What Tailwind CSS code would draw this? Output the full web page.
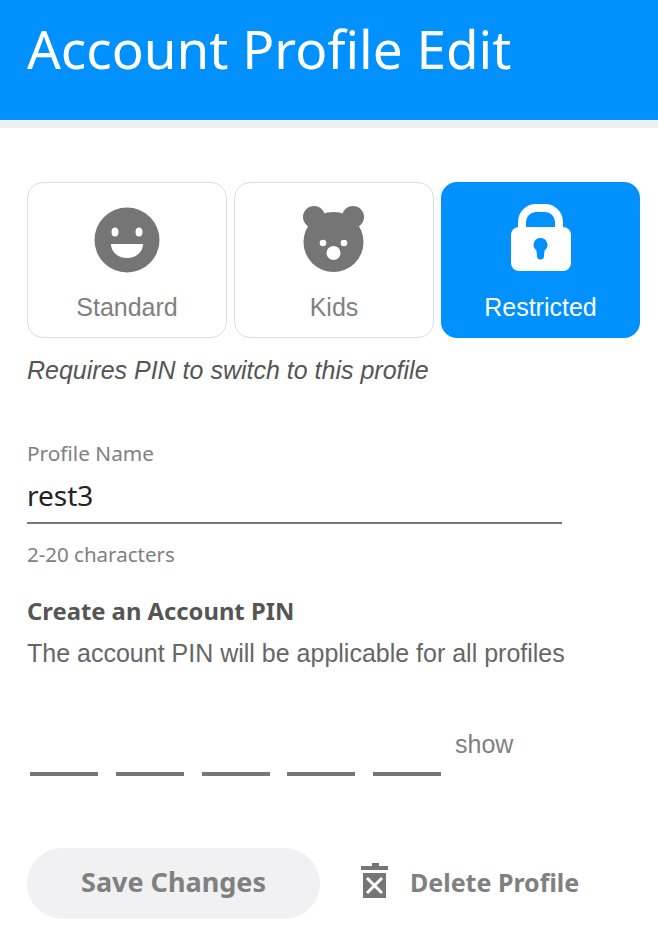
<!DOCTYPE html>
<html lang="en">
<head>
    <meta charset="UTF-8">
    <title>Account Profile Edit</title>
    <script src="https://cdn.jsdelivr.net/npm/@tailwindcss/browser@4"></script>
</head>
<body class="bg-white w-[658px] h-[937px] overflow-hidden font-['Noto_Sans',sans-serif]">
    <!-- Header -->
    <header class="h-[128px] bg-[#0091ff] border-b-[8px] border-[#eef0f1] pl-[27px] pt-[14px]">
        <h1 class="text-[53px] leading-[70px] text-white">Account Profile Edit</h1>
    </header>

    <main class="pl-[27px]">
        <!-- Profile type -->
        <div class="flex gap-[7px] mt-[54px] font-['Liberation_Sans',sans-serif] text-[25px]">
            <div class="w-[200px] h-[156px] rounded-[16px] border border-[#dcdcdc] flex flex-col items-center text-[#808080]">
                <svg class="mt-[24px]" width="66" height="66" viewBox="0 0 66 66">
                    <circle cx="33" cy="33" r="32.5" fill="#757575"/>
                    <ellipse cx="21" cy="25" rx="3.5" ry="4.5" fill="#fff"/>
                    <ellipse cx="45" cy="25" rx="3.5" ry="4.5" fill="#fff"/>
                    <path d="M17 37h32c0 8-7 14-16 14s-16-6-16-14z" fill="#fff"/>
                </svg>
                <span class="mt-[20px] leading-[28px]">Standard</span>
            </div>
            <div class="w-[200px] h-[156px] rounded-[16px] border border-[#dcdcdc] flex flex-col items-center text-[#808080]">
                <svg class="mt-[23px]" width="62" height="68" viewBox="0 0 62 68">
                    <circle cx="11" cy="11" r="11" fill="#757575"/>
                    <circle cx="50" cy="11" r="11" fill="#757575"/>
                    <ellipse cx="30.500" cy="36" rx="30" ry="30" fill="#757575"/>
                    <circle cx="20" cy="37" r="3.300" fill="#fff"/>
                    <circle cx="41" cy="37" r="3.300" fill="#fff"/>
                    <circle cx="30.500" cy="47" r="7" fill="#fff"/>
                </svg>
                <span class="mt-[19px] leading-[28px]">Kids</span>
            </div>
            <div class="w-[199px] h-[156px] rounded-[16px] bg-[#0091ff] flex flex-col items-center text-white">
                <svg class="mt-[22px]" width="60" height="68" viewBox="0 0 60 68">
                    <path d="M11 30V18A14 14 0 0 1 25 4h9a14 14 0 0 1 14 14v12" fill="none" stroke="#fff" stroke-width="8"/>
                    <rect x="0" y="23" width="60" height="44" rx="8" fill="#fff"/>
                    <path d="M29.500 34a7 7 0 0 1 4 12.700l-.5 5.300a3.500 3.500 0 0 1-7 0l-.5-5.300A7 7 0 0 1 29.500 34z" fill="#0091ff"/>
                </svg>
                <span class="mt-[21px] leading-[28px]">Restricted</span>
            </div>
        </div>
        <p class="mt-[18px] font-['Liberation_Sans',sans-serif] italic text-[25px] leading-[28px] text-[#555]">Requires PIN to switch to this profile</p>

        <!-- Profile name -->
        <div class="w-[535px] mt-[56px]">
            <label class="block text-[20.800px] leading-[26px] text-[#808080]">Profile Name</label>
            <div class="mt-[6px] h-[52px] border-b-2 border-[#777] text-[28px] leading-[46px] text-[#222]">rest3</div>
            <p class="mt-[17px] text-[20.500px] leading-[26px] text-[#808080]">2-20 characters</p>
        </div>

        <!-- PIN -->
        <h2 class="mt-[29px] text-[23.800px] leading-[30px] font-bold text-[#555]">Create an Account PIN</h2>
        <p class="mt-[11px] font-['Liberation_Sans',sans-serif] text-[25px] leading-[32px] text-[#666]">The account PIN will be applicable for all profiles</p>
        <div class="flex items-start mt-[61px] pl-[3px]">
            <div class="flex gap-[17.750px] pt-[42px]">
                <div class="w-[68px] h-[4px] bg-[#777]"></div>
                <div class="w-[68px] h-[4px] bg-[#777]"></div>
                <div class="w-[68px] h-[4px] bg-[#777]"></div>
                <div class="w-[68px] h-[4px] bg-[#777]"></div>
                <div class="w-[68px] h-[4px] bg-[#777]"></div>
            </div>
            <span class="ml-[14px] font-['Liberation_Sans',sans-serif] text-[25px] leading-[28px] text-[#808080]">show</span>
        </div>

        <!-- Actions -->
        <div class="flex items-center mt-[72px]">
            <button class="w-[293px] h-[71px] rounded-[36px] bg-[#f1f0f2] pb-[3px] text-[27px] font-bold text-[#808080]">Save Changes</button>
            <svg class="ml-[41px] mb-[5px]" width="27" height="36" viewBox="0 0 27 36">
                <path d="M11 0h7v3h9v4H0V3h11z" fill="#757575"/>
                <rect x="2" y="10" width="23" height="25" fill="#757575"/>
                <path d="M6 15l15 15M21 15L6 30" stroke="#fff" stroke-width="3"/>
            </svg>
            <span class="ml-[22px] mb-[2px] text-[25px] font-bold text-[#808080]">Delete Profile</span>
        </div>
    </main>
</body>
</html>
